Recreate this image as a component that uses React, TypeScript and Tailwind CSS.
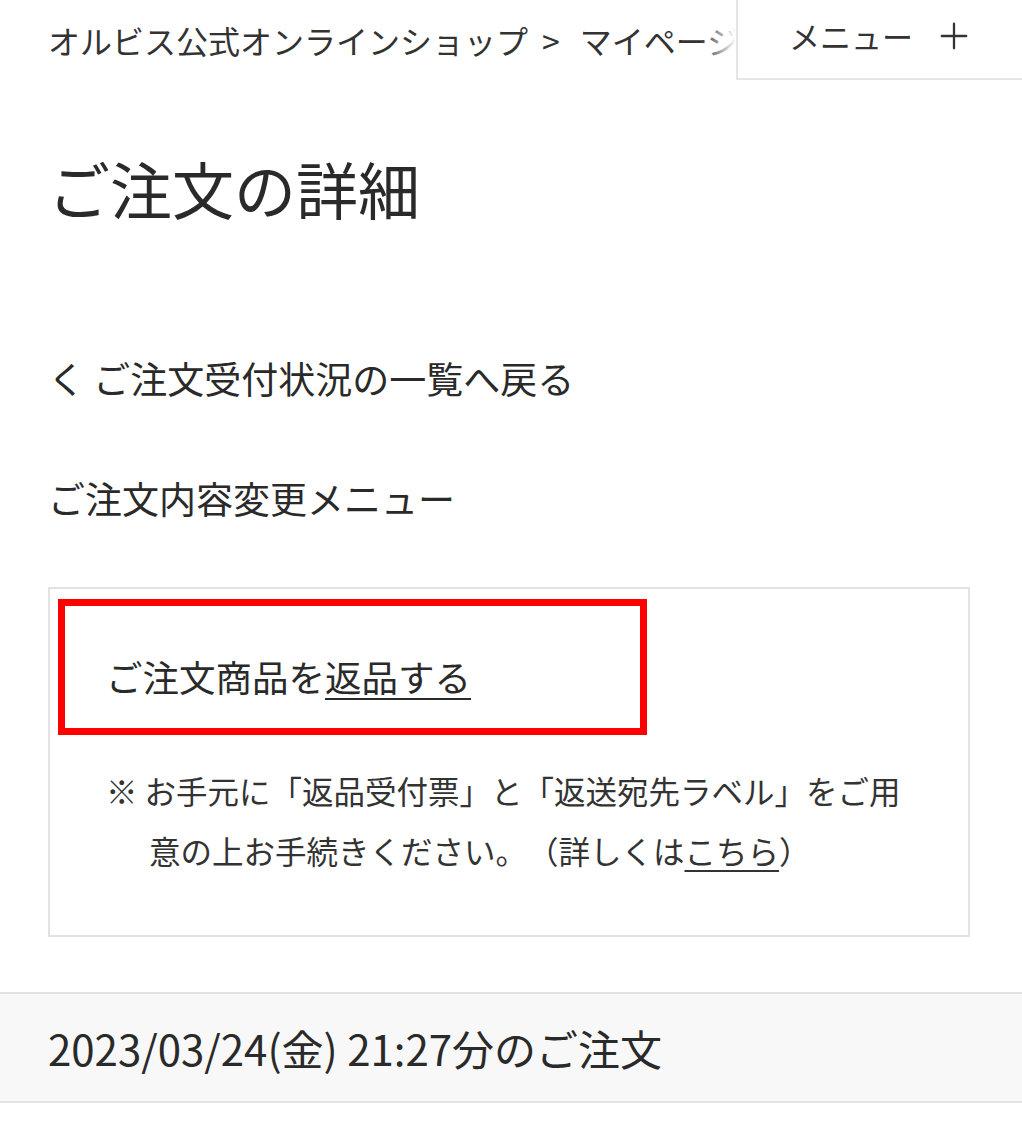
import { Plus } from "lucide-react";

const JP = "font-['Noto_Sans_CJK_JP','Noto_Sans',sans-serif]";

function Header() {
  return (
    <header className="flex h-[80px]">
      <div className="relative flex flex-1 items-center overflow-hidden whitespace-nowrap pl-[48px] text-[32px] leading-[44px] text-[#333]">
        <span>オルビス公式オンラインショップ</span>
        <span className="ml-[14px] mr-[20px]">&gt;</span>
        <span>マイページ</span>
        <span className="absolute right-0 top-0 h-full w-[36px] bg-gradient-to-r from-white/0 to-white" aria-hidden="true" />
      </div>
      <button className="flex w-[286px] items-center justify-center gap-[20px] border-b-2 border-l-2 border-[#e6e6e6] pb-[6px] pl-[4px] text-[31px] text-[#333]">
        <span>メニュー</span>
        <Plus className="h-[42px] w-[42px]" strokeWidth={1.3} aria-hidden="true" />
      </button>
    </header>
  );
}

export default function App() {
  return (
    <div className={`${JP} min-h-[1125px] bg-white text-[#2a2a2a] [text-spacing-trim:space-all]`}>
      <Header />

      <main className="pl-[48px] pr-[52px]">
        <h1 className="mt-[62px] text-[62px] font-normal leading-[92px]">ご注文の詳細</h1>

        <a href="#" className="mt-[117px] block text-[37px] leading-[54px]">
          く ご注文受付状況の一覧へ戻る
        </a>

        <h2 className="mt-[66px] text-[37px] leading-[54px]">ご注文内容変更メニュー</h2>

        <section className="mt-[62px] border-2 border-[#e2e2e2] pb-[55px]">
          <div className="ml-[8px] mt-[10px] flex h-[136px] w-[589px] items-center border-[7px] border-[#ff0000] pl-[41px] pt-[20px] text-[36.5px] leading-[54px]">
            <span>
              ご注文商品を
              <a href="#" className="underline decoration-2 underline-offset-[6px]">
                返品する
              </a>
            </span>
          </div>

          <p className="mt-[25px] pl-[99px] pr-[56px] -indent-[43px] text-[31.5px] leading-[60px] text-[#333]">
            ※ お手元に「返品受付票」と「返送宛先ラベル」をご用意の上お手続きください。（詳しくは
            <a href="#" className="underline decoration-2 underline-offset-[6px]">
              こちら
            </a>
            ）
          </p>
        </section>
      </main>

      <div className="mt-[55px] flex h-[111px] items-center border-y-2 border-[#e2e2e2] bg-[#f8f8f8] pl-[48px] text-[42px] text-[#2a2a2a]">
        2023/03/24(金) 21:27分のご注文
      </div>
    </div>
  );
}
